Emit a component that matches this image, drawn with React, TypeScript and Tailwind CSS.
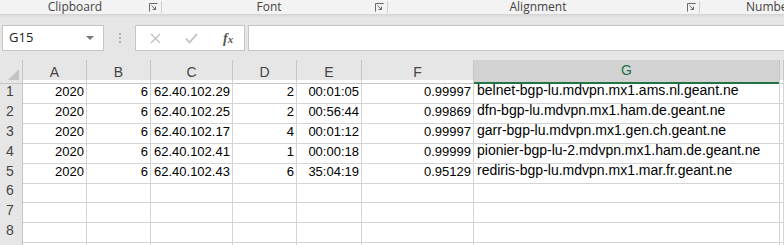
import React from 'react';

const COLS = ['A', 'B', 'C', 'D', 'E', 'F', 'G', ''];

const ROWS: string[][] = [
  ['2020', '6', '62.40.102.29', '2', '00:01:05', '0.99997', 'belnet-bgp-lu.mdvpn.mx1.ams.nl.geant.ne'],
  ['2020', '6', '62.40.102.25', '2', '00:56:44', '0.99869', 'dfn-bgp-lu.mdvpn.mx1.ham.de.geant.ne'],
  ['2020', '6', '62.40.102.17', '4', '00:01:12', '0.99997', 'garr-bgp-lu.mdvpn.mx1.gen.ch.geant.ne'],
  ['2020', '6', '62.40.102.41', '1', '00:00:18', '0.99999', 'pionier-bgp-lu-2.mdvpn.mx1.ham.de.geant.ne'],
  ['2020', '6', '62.40.102.43', '6', '35:04:19', '0.95129', 'rediris-bgp-lu.mdvpn.mx1.mar.fr.geant.ne'],
  [], [], [], [],
];

// C and G hold text (left aligned), everything else is a number
const LEFT = [false, false, true, false, false, false, true];

const grid = 'grid grid-cols-[23px_64px_64px_82px_64px_65px_112px_306px_1fr]';

function Launcher() {
  return (
    <svg width="9" height="9" viewBox="0 0 9 9" className="text-[#6a6a6a]">
      <path d="M0.5 8.5V0.5h8" fill="none" stroke="currentColor" strokeWidth="1" />
      <path d="M2.5 2.5l4 4M3.5 6.5h3v-3" fill="none" stroke="currentColor" strokeWidth="1" />
    </svg>
  );
}

function RibbonGroup({ label, width }: { label: string; width: string }) {
  return (
    <div className={`relative flex h-full shrink-0 items-center justify-center ${width}`}>
      <span className="pr-3">{label}</span>
      <span className="absolute right-[4px] top-[3px]">
        <Launcher />
      </span>
      <span className="absolute right-0 top-[1px] h-[12px] w-px bg-[#d0d0d0]" />
    </div>
  );
}

export default function App() {
  return (
    <div className="h-[245px] w-[784px] overflow-hidden bg-[#e6e6e6] font-['Open_Sans',sans-serif] text-[#444]">
      {/* ribbon group labels */}
      <div className="flex h-[15px] border-b border-[#d5d5d5] bg-[#f3f3f3] text-[12px] leading-[14px]">
        <RibbonGroup label="Clipboard" width="w-[162px]" />
        <RibbonGroup label="Font" width="w-[226px]" />
        <RibbonGroup label="Alignment" width="w-[312px]" />
        <div className="flex h-full flex-1 items-center whitespace-nowrap pl-[46px]">Number</div>
      </div>
      <div className="h-[3px] bg-gradient-to-b from-[#dadada] to-[#e6e6e6]" />

      {/* formula bar */}
      <div className="flex h-[42px] items-start pt-[7px]">
        <div className="ml-[2px] flex h-[26px] w-[102px] items-center justify-between border border-[#c6c6c6] bg-white pl-[6px] pr-[9px] text-[13px] text-[#222]">
          <span>G15</span>
          <svg width="8" height="4" viewBox="0 0 8 4">
            <path d="M0 0h8L4 4z" fill="#777" />
          </svg>
        </div>
        <div className="flex w-[31px] flex-col items-center gap-[2px] pt-[8px]">
          <span className="h-[2px] w-[2px] bg-[#b0b0b0]" />
          <span className="h-[2px] w-[2px] bg-[#b0b0b0]" />
          <span className="h-[2px] w-[2px] bg-[#b0b0b0]" />
        </div>
        <div className="flex h-[26px] w-[110px] items-center border border-[#c6c6c6] bg-white">
          <svg width="11" height="11" viewBox="0 0 11 11" className="ml-[14px]">
            <path d="M1 1l9 9M10 1l-9 9" stroke="#c0c0c0" strokeWidth="1.3" />
          </svg>
          <svg width="13" height="11" viewBox="0 0 13 11" className="ml-[24px]">
            <path d="M1 5.5l3.5 4L12 1" fill="none" stroke="#c0c0c0" strokeWidth="1.8" />
          </svg>
          <span className="ml-[25px] font-['Liberation_Serif',serif] text-[14px] font-bold italic text-[#555]">
            f<span className="text-[11px]">x</span>
          </span>
        </div>
        <div className="ml-[3px] h-[26px] flex-1 border border-r-0 border-[#c6c6c6] bg-white" />
      </div>

      {/* sheet */}
      <div className="bg-white font-['Liberation_Sans',sans-serif] text-[13px] text-black">
        <div className={`${grid} h-[20px] bg-[#e6e6e6] text-[14px] text-[#444]`}>
          <div className="relative border-b border-r border-[#c6c6c6] bg-[#e6e6e6]">
            <svg width="11" height="11" viewBox="0 0 11 11" className="absolute bottom-[3px] right-[3px]">
              <path d="M11 0v11H0z" fill="#c3c3c3" />
            </svg>
          </div>
          {COLS.map((c, i) =>
            c === 'G' ? (
              <div key={i} className="flex items-center justify-center border-b-2 border-r border-b-[#217346] border-r-[#c6c6c6] bg-[#d2d2d2] pb-[1px] text-[#217346]">
                {c}
              </div>
            ) : (
              <div key={i} className="flex items-center justify-center border-b border-r border-[#c6c6c6] pt-[1px]">
                {c}
              </div>
            ),
          )}
        </div>
        {ROWS.map((row, r) => (
          <div key={r} className={`${grid} h-[20px]`}>
            <div className="flex items-end border-b border-r border-[#c6c6c6] bg-[#e6e6e6] pb-[1px] pl-[6px] text-[14px] text-[#444]">
              {r + 1}
            </div>
            {COLS.map((_, i) => (
              <div
                key={i}
                className={`flex items-end overflow-visible whitespace-nowrap border-b border-r border-[#d4d4d4] pb-[2px] ${
                  LEFT[i] ? 'justify-start pl-[3px]' : 'justify-end pr-[2px]'
                } ${i === 6 ? 'pb-[1px] text-[14px]' : ''}`}
              >
                {row[i] ?? ''}
              </div>
            ))}
          </div>
        ))}
      </div>
    </div>
  );
}
